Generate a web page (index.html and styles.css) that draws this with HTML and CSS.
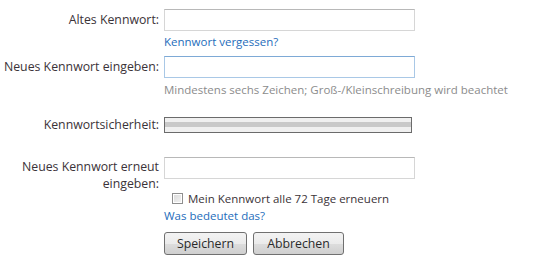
FILE: index.html
```html
<!DOCTYPE html>
<html lang="de">
<head>
    <meta charset="UTF-8">
    <title>Kennwort ändern</title>
    <link rel="stylesheet" href="styles.css">
</head>
<body>
    <div class="form">
        <div class="row">
            <label class="label" for="old-pw">Altes Kennwort:</label>
            <div class="field">
                <input type="password" id="old-pw" class="text">
                <a href="#" class="link">Kennwort vergessen?</a>
            </div>
        </div>
        <div class="row">
            <label class="label" for="new-pw">Neues Kennwort eingeben:</label>
            <div class="field">
                <input type="password" id="new-pw" class="text focused">
                <span class="hint">Mindestens sechs Zeichen; Groß-/Kleinschreibung wird beachtet</span>
            </div>
        </div>
        <div class="row strength-row">
            <span class="label">Kennwortsicherheit:</span>
            <div class="field">
                <div class="strength"><div class="strength-fill"></div></div>
            </div>
        </div>
        <div class="row repeat-row">
            <label class="label two-line" for="repeat-pw">Neues Kennwort erneut eingeben:</label>
            <div class="field">
                <input type="password" id="repeat-pw" class="text">
                <label class="check"><span class="box"></span>Mein Kennwort alle 72 Tage erneuern</label>
                <a href="#" class="link">Was bedeutet das?</a>
                <div class="buttons">
                    <button class="btn save">Speichern</button>
                    <button class="btn cancel">Abbrechen</button>
                </div>
            </div>
        </div>
    </div>
</body>
</html>
```

FILE: styles.css
```css
body {
    margin: 0;
    background: #fff;
    font-family: "Open Sans", "Noto Sans", sans-serif;
    font-size: 11.5px;
    color: #3b3338;
}

.form {
    padding-top: 9px;
}

.row {
    display: flex;
    gap: 5px;
}

.label {
    width: 159px;
    flex: none;
    text-align: right;
    line-height: 22px;
    font-size: 12.3px;
}

.field {
    display: flex;
    flex-direction: column;
    align-items: flex-start;
}

.text {
    width: 251px;
    height: 22px;
    box-sizing: border-box;
    margin: 0;
    border: 1px solid #d6d6d6;
    border-top-color: #b8b8b8;
    background: #fff;
    outline: none;
}

.text.focused {
    border-color: #a9c8e6;
    border-top-color: #7eaad6;
}

.link {
    color: #1e6dbb;
    text-decoration: none;
    line-height: 17px;
    margin: 2px 0 6px;
}

.hint {
    color: #8c8c8c;
    line-height: 17px;
    margin-top: 3px;
}

.strength-row {
    margin-top: 19px;
}

.strength-row .label {
    line-height: 16px;
}

.strength {
    width: 248px;
    height: 16px;
    box-sizing: border-box;
    border: 1px solid #6b6b6b;
    background: #f0f0f0;
    padding: 4px 0 0;
}

.strength-fill {
    height: 5px;
    background: #c9c9c9;
}

.repeat-row {
    margin-top: 24px;
}

.two-line {
    line-height: 17px;
    padding-top: 1px;
}

.check {
    display: flex;
    align-items: center;
    gap: 5px;
    margin: 11px 0 0 8px;
    line-height: 17px;
}

.box {
    width: 11px;
    height: 11px;
    box-sizing: border-box;
    border: 1px solid #8f8f8f;
    background: linear-gradient(135deg, #d9d9d9, #f4f4f4);
    box-shadow: inset 0 0 0 1px #fff;
}

.repeat-row .link {
    margin: 0;
}

.buttons {
    display: flex;
    gap: 6px;
    margin-top: 8px;
}

.btn {
    height: 23px;
    box-sizing: border-box;
    border: 1px solid #707070;
    border-radius: 3px;
    background: linear-gradient(#f3f3f3 0%, #ebebeb 50%, #dddddd 51%, #cfcfcf 100%);
    font-family: inherit;
    font-size: 12.3px;
    color: #2a2a2a;
    padding: 0;
}

.save {
    width: 83px;
}

.cancel {
    width: 91px;
}
```
